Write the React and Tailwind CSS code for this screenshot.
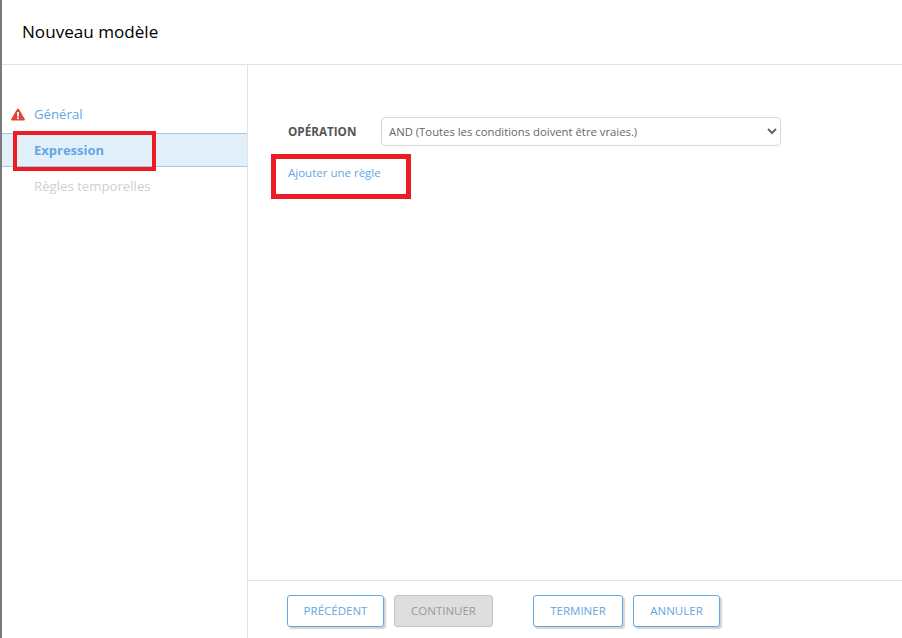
function WarningIcon() {
  return (
    <svg width="14" height="13" viewBox="0 0 14 13" className="-mt-[2px] shrink-0">
      <path d="M7 .6c.4 0 .7.2.9.5l5.8 10c.4.7-.1 1.5-.9 1.5H1.2c-.8 0-1.3-.8-.9-1.5l5.800-10c.2-.3.5-.5.9-.5z" fill="#e0433a" />
      <rect x="6.1" y="4" width="1.8" height="4.600" fill="#fff" />
      <rect x="6.100" y="9.400" width="1.800" height="1.700" fill="#fff" />
    </svg>
  );
}

function FooterButton({ children, className, disabled }) {
  return (
    <button
      disabled={disabled}
      className={
        "h-8 rounded-[3px] border text-[11.5px] uppercase " +
        (disabled
          ? "border-[#c4c4c4] bg-[#dedede] text-[#999999] "
          : "border-[#64a6e3] bg-white text-[#64a6e3] shadow-[2px_2px_1px_#d5d5d5] ") +
        className
      }
    >
      {children}
    </button>
  );
}

export default function App() {
  return (
    <div className="relative flex h-[638px] w-[902px] flex-col overflow-hidden border-l-2 border-[#7a7a7a] bg-white font-['Open_Sans',sans-serif]">
      <header className="flex h-[65px] shrink-0 items-center border-b border-[#e2e2e2] pl-[20px]">
        <h1 className="text-[17.1px] text-black">Nouveau modèle</h1>
      </header>

      <div className="flex min-h-0 flex-1">
        <aside className="w-[246px] shrink-0 border-r border-[#e2e2e2] pt-[32px] text-[13.2px]">
          <div className="flex h-[36px] items-center gap-[9px] pl-[9px] text-[#64a6e3]">
            <WarningIcon />
            <span>Général</span>
          </div>
          <div className="flex h-[34px] items-center border-y border-[#9ccbf0] bg-[#e2f0fa] pl-[32px] pt-px text-[13px] font-bold text-[#64a6e3]">
            Expression
          </div>
          <div className="flex h-[40px] items-center pl-[32px] text-[#cfcfcf]">Règles temporelles</div>
        </aside>

        <main className="flex min-w-0 flex-1 flex-col">
          <div className="flex-1 pl-[40px] pt-[52px]">
            <div className="flex items-center">
              <label className="w-[93px] text-[11.7px] font-bold text-[#555555]">OPÉRATION</label>
              <select className="h-[29px] w-[400px] rounded-[4px] border border-[#d8d8d8] bg-white pl-[3px] text-[11.3px] text-[#666666] outline-none">
                <option>AND (Toutes les conditions doivent être vraies.)</option>
              </select>
            </div>
            <a className="mt-[18px] block text-[11.5px] text-[#64a6e3]">Ajouter une règle</a>
          </div>

          <footer className="flex h-[58px] shrink-0 border-t border-[#e2e2e2] pl-[39px] pt-[14px]">
            <FooterButton className="w-[97px]">Précédent</FooterButton>
            <FooterButton className="ml-[10px] w-[99px]" disabled>Continuer</FooterButton>
            <FooterButton className="ml-[40px] w-[90px]">Terminer</FooterButton>
            <FooterButton className="ml-[10px] w-[87px]">Annuler</FooterButton>
          </footer>
        </main>
      </div>

      <div className="absolute left-[11px] top-[131px] h-[40px] w-[143px] border-[4px] border-[#ed1c24]" />
      <div className="absolute left-[269px] top-[154px] h-[45px] w-[140px] border-[5px] border-[#ed1c24]" />
    </div>
  );
}
